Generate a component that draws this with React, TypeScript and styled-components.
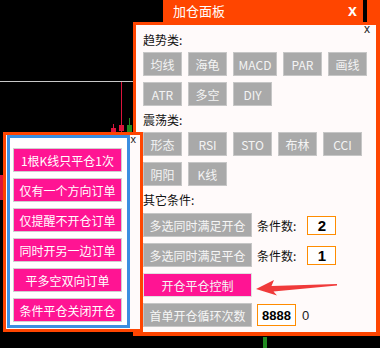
import React from 'react'
import styled, { createGlobalStyle } from 'styled-components'

const trendButtons = ['均线', '海龟', 'MACD', 'PAR', '画线', 'ATR', '多空', 'DIY']
const swingButtons = ['形态', 'RSI', 'STO', '布林', 'CCI', '阴阳', 'K线']
const orderButtons = [
  '1根K线只平仓1次',
  '仅有一个方向订单',
  '仅提醒不开仓订单',
  '同时开另一边订单',
  '平多空双向订单',
  '条件平仓关闭开仓',
]

export default function App() {
  return (
    <>
      <GlobalStyle />
      <Screen>
        {/* price chart behind the panels */}
        <Chart width="380" height="348" viewBox="0 0 380 348">
          <line x1="0" y1="81.5" x2="380" y2="81.5" stroke="#c8c8c8" strokeWidth="1" />
          <line x1="121.5" y1="82" x2="121.5" y2="132" stroke="#dc143c" strokeWidth="1" />
          <line x1="113.5" y1="124" x2="113.5" y2="132" stroke="#dc143c" strokeWidth="1" />
          <rect x="111" y="128" width="5" height="4" fill="#dc143c" />
          <rect x="119" y="125" width="5" height="6" fill="#dc143c" />
          <line x1="129.5" y1="118" x2="129.5" y2="132" stroke="#228b22" strokeWidth="1" />
          <rect x="127" y="125" width="5" height="8" fill="#228b22" />
          <rect x="0" y="175" width="3" height="25" fill="#dc143c" />
          <rect x="263" y="337" width="4" height="11" fill="#228b22" />
        </Chart>

        <MainWindow>
          <TitleBar>
            <Title>加仓面板</Title>
            <TitleClose>x</TitleClose>
            <TitleDivider />
            <TitleTail />
          </TitleBar>

          <Body>
            <PanelClose>x</PanelClose>

            <Section>
              <SectionLabel>趋势类:</SectionLabel>
              <ButtonGrid>
                {trendButtons.map(label => (
                  <GrayButton key={label} wide={label === 'MACD'}>
                    {label}
                  </GrayButton>
                ))}
              </ButtonGrid>
            </Section>

            <Section>
              <SectionLabel>震荡类:</SectionLabel>
              <ButtonGrid>
                {swingButtons.map(label => (
                  <GrayButton key={label}>{label}</GrayButton>
                ))}
              </ButtonGrid>
            </Section>

            <Section>
              <SectionLabel>其它条件:</SectionLabel>
              <ConditionList>
                <ConditionRow>
                  <LongButton>多选同时满足开仓</LongButton>
                  <CountLabel>条件数:</CountLabel>
                  <NumberBox>2</NumberBox>
                </ConditionRow>
                <ConditionRow>
                  <LongButton>多选同时满足平仓</LongButton>
                  <CountLabel>条件数:</CountLabel>
                  <NumberBox>1</NumberBox>
                </ConditionRow>
                <ConditionRow>
                  <LongButton active>开仓平仓控制</LongButton>
                  <Arrow width="84" height="18" viewBox="0 0 84 18">
                    <polygon
                      points="0,10 18,1 15.5,7 81,5 81,6.5 17.5,12.5 21,16.5"
                      fill="#f03a3a"
                    />
                  </Arrow>
                </ConditionRow>
                <ConditionRow>
                  <LongButton>首单开仓循环次数</LongButton>
                  <NumberBox wide>8888</NumberBox>
                  <Counter>0</Counter>
                </ConditionRow>
              </ConditionList>
            </Section>
          </Body>
        </MainWindow>

        <OrderWindow>
          <OrderClose>x</OrderClose>
          <OrderFrame>
            {orderButtons.map(label => (
              <PinkButton key={label}>{label}</PinkButton>
            ))}
          </OrderFrame>
        </OrderWindow>
      </Screen>
    </>
  )
}

///////////////////////////////////////////////////////////////////////////////////

const GlobalStyle = createGlobalStyle`
  html, body {
    margin: 0;
    padding: 0;
    background: #000;
  }
  body {
    font-family: "Noto Sans CJK SC", "Liberation Sans", sans-serif;
  }
`

const Screen = styled.div`
  position: relative;
  width: 380px;
  height: 348px;
  overflow: hidden;
  background: #000;
`

const Chart = styled.svg`
  position: absolute;
  left: 0;
  top: 0;
  display: block;
`

const MainWindow = styled.div`
  position: absolute;
  left: 133px;
  top: 0;
  width: 247px;
`

const TitleBar = styled.div`
  display: flex;
  align-items: center;
  height: 22px;
  margin-left: 30px;
  background: #ff4500;
  color: #fff;
`

const Title = styled.span`
  flex: 1;
  padding-left: 10px;
  font-size: 13px;
  line-height: 22px;
`

const TitleClose = styled.span`
  margin-right: 6px;
  font-family: "Liberation Sans", sans-serif;
  font-size: 16px;
  font-weight: 700;
  line-height: 22px;
`

const TitleDivider = styled.span`
  width: 4px;
  height: 22px;
  background: #000;
`

const TitleTail = styled.span`
  width: 13px;
`

const Body = styled.div`
  position: relative;
  border-style: solid;
  border-color: #ff4500;
  border-width: 3px 4px 4px 3px;
  background: #fffafa;
  padding: 5px 0 5px 7px;
`

const PanelClose = styled.span`
  position: absolute;
  right: 6px;
  top: -2px;
  font-family: "Liberation Sans", sans-serif;
  font-size: 12px;
  line-height: 12px;
  color: #222;
`

const Section = styled.section`
  & + & {
    margin-top: 4px;
  }
`

const SectionLabel = styled.div`
  height: 20px;
  font-size: 12px;
  line-height: 20px;
  color: #111;
`

const ButtonGrid = styled.div`
  display: flex;
  flex-wrap: wrap;
  gap: 6px;
  margin-top: 2px;
`

const GrayButton = styled.div<{ wide?: boolean }>`
  box-sizing: border-box;
  display: flex;
  align-items: center;
  justify-content: center;
  width: ${p => (p.wide ? 44 : 39)}px;
  height: 24px;
  border: 1px solid #c6c6c6;
  background: #a9a9a9;
  color: #f4f4f4;
  font-size: 12px;
`

const ConditionList = styled.div`
  display: flex;
  flex-direction: column;
  gap: 6px;
  margin-top: 3px;
`

const ConditionRow = styled.div`
  display: flex;
  align-items: center;
  height: 24px;
`

const LongButton = styled.div<{ active?: boolean }>`
  box-sizing: border-box;
  display: flex;
  align-items: center;
  justify-content: center;
  flex: none;
  width: 109px;
  height: 24px;
  border: 1px solid ${p => (p.active ? '#e0e0e0' : '#c6c6c6')};
  background: ${p => (p.active ? '#ff1493' : '#a9a9a9')};
  color: #f6f6f6;
  font-size: 12px;
`

const CountLabel = styled.span`
  margin-left: 5px;
  font-size: 12px;
  color: #111;
`

const NumberBox = styled.div<{ wide?: boolean }>`
  box-sizing: border-box;
  display: flex;
  align-items: center;
  justify-content: center;
  width: ${p => (p.wide ? 39 : 29)}px;
  height: ${p => (p.wide ? 22 : 19)}px;
  margin-left: ${p => (p.wide ? 5 : 11)}px;
  border: 1px solid #ff8c00;
  background: #fff;
  font-family: "Liberation Sans", sans-serif;
  font-size: ${p => (p.wide ? 13 : 15)}px;
  font-weight: 700;
  color: #000;
`

const Counter = styled.span`
  margin-left: 6px;
  font-family: "Liberation Sans", sans-serif;
  font-size: 13px;
  color: #222;
`

const Arrow = styled.svg`
  display: block;
  margin-left: 4px;
  margin-top: 5px;
`

const OrderWindow = styled.div`
  position: absolute;
  left: 3px;
  top: 132px;
  width: 140px;
  box-sizing: border-box;
  border: 3px solid #ff4500;
  padding: 0 10px 1px 1px;
  background: #fffafa;
`

const OrderClose = styled.span`
  position: absolute;
  right: 4px;
  top: -1px;
  font-family: "Liberation Sans", sans-serif;
  font-size: 11px;
  line-height: 11px;
  color: #222;
`

const OrderFrame = styled.div`
  display: flex;
  flex-direction: column;
  gap: 6px;
  border: 3px solid #3b8ee0;
  padding: 10px 5px 3px 3px;
  background: #fff;
`

const PinkButton = styled.div`
  box-sizing: border-box;
  display: flex;
  align-items: center;
  justify-content: center;
  height: 24px;
  border: 1px solid #cfcfcf;
  background: #ff1493;
  color: #fff;
  font-size: 12px;
`
